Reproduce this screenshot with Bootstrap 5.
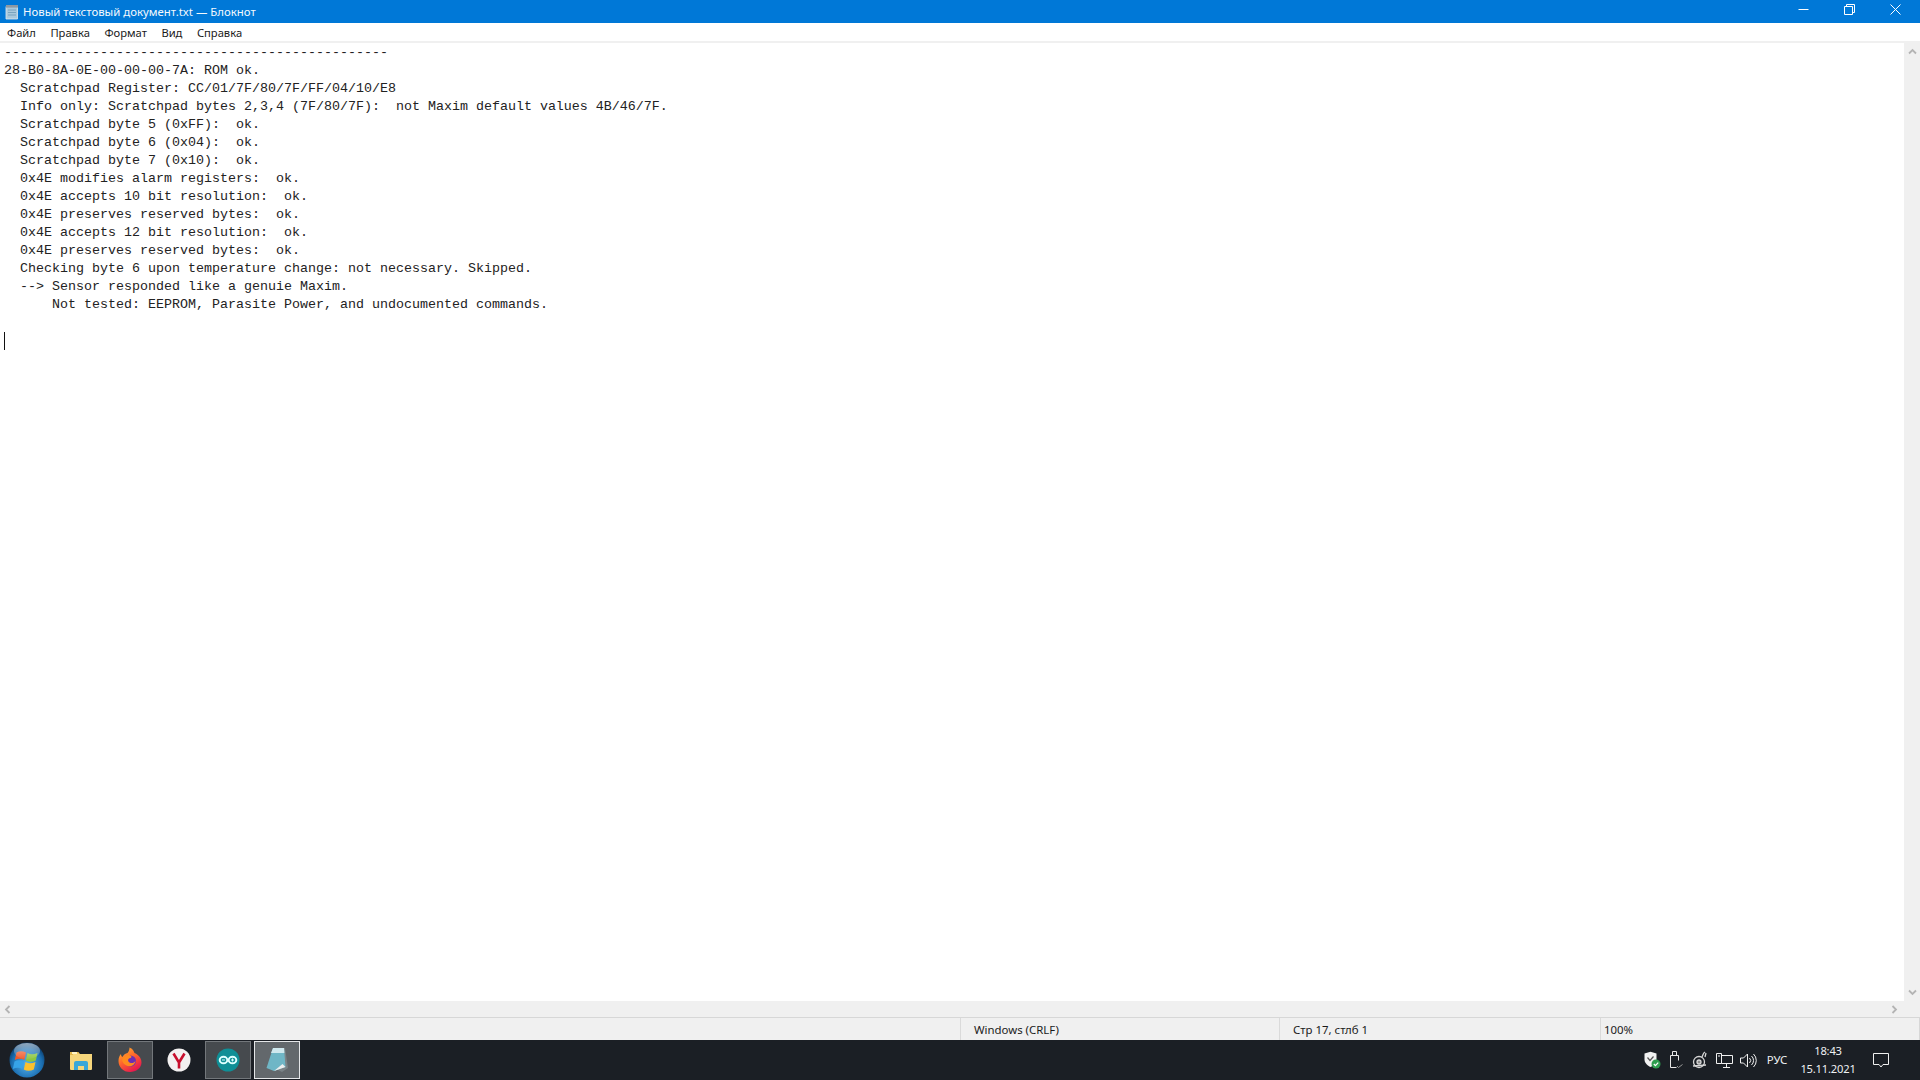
<!DOCTYPE html>
<html lang="ru">
<head>
<meta charset="utf-8">
<title>Блокнот</title>
<link href="https://cdn.jsdelivr.net/npm/bootstrap@5.3.0/dist/css/bootstrap.min.css" rel="stylesheet">
<style>
html,body{height:100%;margin:0;overflow:hidden;background:#fff}
body{font-family:"Noto Sans","Liberation Sans",sans-serif;font-size:12px;color:#1a1a1a}
.win-shell{height:1080px;width:1920px}
.title-strip{height:23px;background:#0078d7;color:#f4f9fd;padding-left:4px;flex:none}
.title-strip .ttl{margin-left:3px;font-size:11.4px;line-height:23px}
.wctl{width:46px;height:23px}
.wctls{padding-right:2px}
.menu-strip{height:18px;background:#fff;padding-left:7px;gap:14.5px;flex:none;line-height:19px;font-size:11.2px}
.edit-zone{min-height:0;border-top:2px solid #f0f0f0}
.text-pane{padding:1px 0 0 4px;min-width:0}
.text-pane pre{margin:0;font-family:"Liberation Mono","DejaVu Sans Mono",monospace;font-size:13.33px;line-height:18px;color:#222;overflow:hidden}
.caret-bar{width:1px;height:18px;background:#111;display:block}
.vbar{width:16px;background:#f0f0f0;padding:5px 0}
.hbar{height:16px;background:#f0f0f0;padding:0 22px 0 4px;flex:none}
.status-strip{height:23px;background:#f0f0f0;border-top:1px solid #d7d7d7;flex:none;line-height:23px;font-size:11.4px;border-right:1px solid #d7d7d7}
.st-a{width:960px}
.st-b{width:319px;border-left:1px solid #dadada;padding-left:13px}
.st-c{width:321px;border-left:1px solid #dadada;padding-left:13px}
.st-d{flex:1;border-left:1px solid #dadada;padding-left:3px}
.task-strip{height:40px;background:#1b1f25;flex:none;color:#eef0f2}
.orb-cell{width:54px;height:40px}
.task-apps{gap:3px;margin-left:4px}
.task-cell{width:46px;height:38px;margin-top:1px;border:1px solid transparent}
.cell-open{background:#464a4e;border-color:#73777b}
.cell-active{background:#63686c;border-color:#e4e6e8}
.tray-cell{width:24px;height:40px}
.lang-cell{width:34px;font-size:11.4px;text-align:center}
.clock-cell{width:68px;font-size:11.2px;line-height:18px;text-align:center;letter-spacing:-.2px}
.note-cell{width:38px;height:40px;margin-right:20px}
</style>
</head>
<body>
<div class="win-shell d-flex flex-column">

  <div class="title-strip d-flex align-items-center">
    <svg width="16" height="16" viewBox="0 0 16 16"><path d="M2 2.500h11.500V15H2z" fill="#a9c9dc"/><path d="M2 2.500h11.500V15H2z" fill="none" stroke="#dfe8ee" stroke-width=".8"/><path d="M2 1h12v2.600H2z" fill="#8d99a3"/><path d="M4 6h8M4 8.500h8M4 11h8" stroke="#6d9ab8" stroke-width=".8"/></svg>
    <span class="ttl flex-grow-1">Новый текстовый документ.txt — Блокнот</span>
    <div class="d-flex wctls">
      <div class="wctl d-flex align-items-center justify-content-center pb-1"><svg width="11" height="11" viewBox="0 0 11 11"><path d="M.5 5.500h10" stroke="#fff" stroke-width="1"/></svg></div>
      <div class="wctl d-flex align-items-center justify-content-center pb-1"><svg width="11" height="11" viewBox="0 0 11 11" fill="none" stroke="#fff"><path d="M.5 2.500h8v8h-8z"/><path d="M2.500 2.500v-2h8v8h-2"/></svg></div>
      <div class="wctl d-flex align-items-center justify-content-center pb-1"><svg width="11" height="11" viewBox="0 0 11 11"><path d="M.5.500l10 10M10.500.500l-10 10" stroke="#fff" stroke-width="1"/></svg></div>
    </div>
  </div>

  <div class="menu-strip d-flex">
    <span>Файл</span><span>Правка</span><span>Формат</span><span>Вид</span><span>Справка</span>
  </div>

  <div class="edit-zone d-flex flex-grow-1">
    <div class="text-pane flex-grow-1">
<pre>------------------------------------------------
28-B0-8A-0E-00-00-00-7A: ROM ok.
  Scratchpad Register: CC/01/7F/80/7F/FF/04/10/E8
  Info only: Scratchpad bytes 2,3,4 (7F/80/7F):  not Maxim default values 4B/46/7F.
  Scratchpad byte 5 (0xFF):  ok.
  Scratchpad byte 6 (0x04):  ok.
  Scratchpad byte 7 (0x10):  ok.
  0x4E modifies alarm registers:  ok.
  0x4E accepts 10 bit resolution:  ok.
  0x4E preserves reserved bytes:  ok.
  0x4E accepts 12 bit resolution:  ok.
  0x4E preserves reserved bytes:  ok.
  Checking byte 6 upon temperature change: not necessary. Skipped.
  --&gt; Sensor responded like a genuie Maxim.
      Not tested: EEPROM, Parasite Power, and undocumented commands.

<span class="caret-bar"></span></pre>
    </div>
    <div class="vbar d-flex flex-column justify-content-between align-items-center">
      <svg width="9" height="7" viewBox="0 0 9 7"><path d="M1 5.500l3.500-3.500 3.500 3.500" fill="none" stroke="#b4b4b4" stroke-width="1.800"/></svg>
      <svg width="9" height="7" viewBox="0 0 9 7"><path d="M1 1.500l3.500 3.500 3.500-3.500" fill="none" stroke="#b4b4b4" stroke-width="1.800"/></svg>
    </div>
  </div>

  <div class="hbar d-flex justify-content-between align-items-center">
    <svg width="7" height="9" viewBox="0 0 7 9"><path d="M5.500 1L2 4.500 5.500 8" fill="none" stroke="#b4b4b4" stroke-width="1.800"/></svg>
    <svg width="7" height="9" viewBox="0 0 7 9"><path d="M1.500 1L5 4.500 1.500 8" fill="none" stroke="#b4b4b4" stroke-width="1.800"/></svg>
  </div>

  <div class="status-strip d-flex">
    <div class="st-a"></div>
    <div class="st-b">Windows (CRLF)</div>
    <div class="st-c">Стр 17, стлб 1</div>
    <div class="st-d">100%</div>
  </div>

  <div class="task-strip d-flex">
    <div class="orb-cell d-flex align-items-center justify-content-center">
      <svg width="36" height="36" viewBox="0 0 36 36">
        <defs>
          <radialGradient id="orb" cx=".5" cy=".62" r=".62"><stop offset="0" stop-color="#56b4ee"/><stop offset=".7" stop-color="#1a6db0"/><stop offset="1" stop-color="#0a3560"/></radialGradient>
          <linearGradient id="gloss" x1="0" y1="0" x2="0" y2="1"><stop offset="0" stop-color="#fff" stop-opacity=".55"/><stop offset="1" stop-color="#fff" stop-opacity=".05"/></linearGradient>
        </defs>
        <circle cx="18" cy="18" r="17.500" fill="url(#orb)"/>
        <path d="M7.500 10.500c3-1.800 6-1.800 9.500 0l-1.700 7.500c-3-1.700-6-1.700-9.500 0z" fill="#ef5a2a"/>
        <path d="M18.500 11c3 1.700 6 1.700 10 0l-1.700 7.500c-3.500 1.700-7 1.700-10 0z" fill="#8cc63f"/>
        <path d="M5.500 19.500c3-1.700 6-1.700 9.500 0l-1.700 7.500c-3-1.700-6-1.700-9.500 0z" fill="#36a3e8"/>
        <path d="M16.500 20c3 1.700 6 1.700 10 0l-1.700 7.500c-3.500 1.700-7 1.700-10 0z" fill="#fbc02d"/>
        <ellipse cx="18" cy="9" rx="13" ry="8" fill="url(#gloss)"/>
      </svg>
    </div>
    <div class="task-apps d-flex">
      <div class="task-cell d-flex align-items-center justify-content-center">
        <svg width="24" height="22" viewBox="0 0 24 22"><path d="M1 3h8l2 2h12v15a1 1 0 0 1-1 1H2a1 1 0 0 1-1-1z" fill="#f6d67c"/><path d="M1 3h8l1.500 1.500H4V6H1z" fill="#e3b84c"/><path d="M3 3h5v2H3z" fill="#fff3c4"/><path d="M5 21v-7a2 2 0 0 1 2-2h10a2 2 0 0 1 2 2v7h-4v-4H9v4z" fill="#3aa7d8"/><path d="M9 17h6v4H9z" fill="#f6d67c" opacity=".5"/></svg>
      </div>
      <div class="task-cell cell-open d-flex align-items-center justify-content-center">
        <svg width="26" height="26" viewBox="0 0 26 26"><defs><linearGradient id="ff" x1="0" y1="0" x2=".6" y2="1"><stop offset="0" stop-color="#ffc22e"/><stop offset=".5" stop-color="#ff6a2b"/><stop offset="1" stop-color="#e6194f"/></linearGradient></defs><path d="M13 25C6 25 1.500 20 1.500 14c0-3 1-5.500 2.500-7 0 1.500.5 2.500 1.500 3 1-2.500 3-3.500 5-4 1.500-1.500 2-4 2-5.500 4 1.500 4.500 4.500 5 5.500 3 1.500 7 4 7 9.500C24.500 21 19 25 13 25z" fill="url(#ff)"/><circle cx="13.500" cy="14" r="5.500" fill="#6b2fb5"/><path d="M5 13c1-3.500 4-5 7-5 2 .5 3.500 2 1.500 3-3 .5-3 3-1 4.500 2.500 1.500 5.500 0 6-2-.5 5-5 6.500-8 5.500C7.500 18 5.500 16 5 13z" fill="#ff8a1e"/></svg>
      </div>
      <div class="task-cell d-flex align-items-center justify-content-center">
        <svg width="24" height="24" viewBox="0 0 24 24"><circle cx="12" cy="12" r="11.500" fill="#f3f1f1"/><path d="M6.500 5.500l5.500 9v6M17.500 5.500l-5.500 9" fill="none" stroke="#c8102e" stroke-width="2.600"/></svg>
      </div>
      <div class="task-cell cell-open d-flex align-items-center justify-content-center">
        <svg width="24" height="24" viewBox="0 0 24 24"><circle cx="12" cy="12" r="11.500" fill="#0f8f96"/><g fill="none" stroke="#dff" stroke-width="2"><ellipse cx="7.500" cy="12" rx="3.800" ry="3.300"/><ellipse cx="16.500" cy="12" rx="3.800" ry="3.300"/></g><path d="M6 12h3M15 12h3M16.500 10.500v3" stroke="#dff" stroke-width="1"/></svg>
      </div>
      <div class="task-cell cell-active d-flex align-items-center justify-content-center">
        <svg width="24" height="28" viewBox="0 0 24 28"><path d="M9 2h11l3 20-6 4-4-2z" fill="#7a8286"/><path d="M8 2h11l1.500 19L9 25 1.500 22z" fill="#6fb6c6"/><path d="M8 2h11l.4 5H6z" fill="#cfe8ee"/><path d="M9 25l11.500-4-3-3z" fill="#eceeee"/></svg>
      </div>
    </div>
    <div class="ms-auto d-flex align-items-center">
      <div class="tray-cell d-flex align-items-center justify-content-center">
        <svg width="18" height="18" viewBox="0 0 18 18"><path d="M1.500 2.500L7.500.8l6 1.700v6c0 3.500-3 6-6 7.500-3-1.500-6-4-6-7.500z" fill="#f2f2f2"/><path d="M4.500 6.500l2.500 3 3.500-4" fill="none" stroke="#555" stroke-width="1.200"/><circle cx="13" cy="13" r="4.500" fill="#2e9e4f"/><path d="M10.800 13l1.600 1.600 2.800-3" fill="none" stroke="#fff" stroke-width="1.200"/></svg>
      </div>
      <div class="tray-cell d-flex align-items-center justify-content-center">
        <svg width="16" height="18" viewBox="0 0 16 18" fill="none" stroke="#e8e8e8"><path d="M4.500.500h4v4h-4zM2.500 4.500h8v5M2.500 4.500v12h6"/><path d="M9 15l1.500 1.500 4-3" stroke="#999"/></svg>
      </div>
      <div class="tray-cell d-flex align-items-center justify-content-center">
        <svg width="16" height="18" viewBox="0 0 16 18" fill="none" stroke="#d6d6d6" stroke-width="1.300"><circle cx="7" cy="11" r="5.500"/><circle cx="7" cy="11" r="2" fill="#888"/><path d="M10 6c1-2 1-4 3-5M13 6l1-4M1 15l13-1"/></svg>
      </div>
      <div class="tray-cell d-flex align-items-center justify-content-center">
        <svg width="17" height="15" viewBox="0 0 17 15" fill="none" stroke="#f0f0f0"><path d="M.5.500h5v10h-5zM5.500 2.500h11v8h-11M10.500 10.500v3.500M7 14.500h7M2 3h2"/></svg>
      </div>
      <div class="tray-cell d-flex align-items-center justify-content-center">
        <svg width="17" height="15" viewBox="0 0 17 15" fill="none" stroke="#f0f0f0"><path d="M.5 5v5h3l4 4V1l-4 4z"/><path d="M9.500 5a3.500 3.500 0 0 1 0 5M11.500 3a6 6 0 0 1 0 9M13.500 1a9 9 0 0 1 0 13"/></svg>
      </div>
      <div class="lang-cell">РУС</div>
      <div class="clock-cell">18:43<br>15.11.2021</div>
      <div class="note-cell d-flex align-items-center justify-content-center">
        <svg width="16" height="15" viewBox="0 0 16 15"><path d="M.5.500h15v11H10l-2 2.500-2-2.500H.5z" fill="none" stroke="#f0f0f0"/></svg>
      </div>
    </div>
  </div>

</div>
</body>
</html>
